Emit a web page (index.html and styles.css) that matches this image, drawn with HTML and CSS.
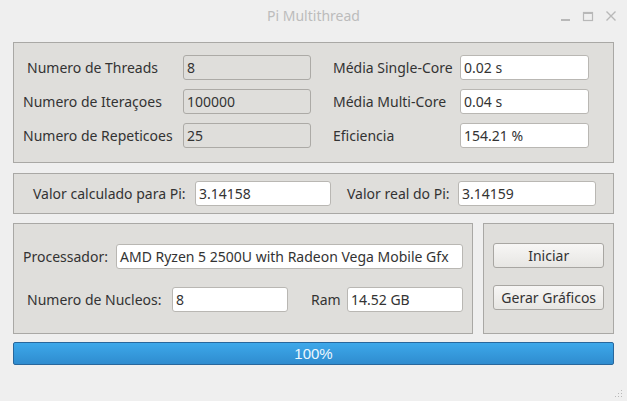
FILE: index.html
```html
<!DOCTYPE html>
<html>
<head>
<meta charset="utf-8">
<link rel="stylesheet" href="styles.css">
</head>
<body>
<div class="window">
  <div class="titlebar">
    <span class="title">Pi Multithread</span>
    <div class="controls">
      <svg width="12" height="12" viewBox="0 0 12 12"><rect x="2" y="9" width="9" height="2" fill="#b8b8b8"/></svg>
      <svg width="12" height="12" viewBox="0 0 12 12"><rect x="1.5" y="2.5" width="9" height="8" fill="none" stroke="#b8b8b8" stroke-width="1.2"/><rect x="1.5" y="2.5" width="9" height="1.5" fill="#b8b8b8"/></svg>
      <svg width="12" height="12" viewBox="0 0 12 12"><path d="M1.5 1.5 L10.5 10.5 M10.5 1.5 L1.5 10.5" stroke="#b8b8b8" stroke-width="1.4"/></svg>
    </div>
  </div>
  <div class="content">
    <div class="group g1">
      <div class="lbl ind4">Numero de Threads</div>
      <div class="field disabled">8</div>
      <div class="lbl r">Média Single-Core</div>
      <div class="field">0.02 s</div>
      <div class="lbl">Numero de Iteraçoes</div>
      <div class="field disabled">100000</div>
      <div class="lbl r">Média Multi-Core</div>
      <div class="field">0.04 s</div>
      <div class="lbl">Numero de Repeticoes</div>
      <div class="field disabled">25</div>
      <div class="lbl r">Eficiencia</div>
      <div class="field">154.21 %</div>
    </div>
    <div class="group g2">
      <div class="lbl l1">Valor calculado para Pi:</div>
      <div class="field f1">3.14158</div>
      <div class="lbl l2">Valor real do Pi:</div>
      <div class="field f2">3.14159</div>
    </div>
    <div class="row3">
      <div class="group g3">
        <div class="prow">
          <div class="lbl lp">Processador:</div>
          <div class="field fp">AMD Ryzen 5 2500U with Radeon Vega Mobile Gfx</div>
        </div>
        <div class="nrow">
          <div class="lbl ln">Numero de Nucleos:</div>
          <div class="field fn">8</div>
          <div class="lbl ram">Ram</div>
          <div class="field fr">14.52 GB</div>
        </div>
      </div>
      <div class="group g4">
        <button class="btn">Iniciar</button>
        <button class="btn">Gerar Gráficos</button>
      </div>
    </div>
    <div class="progress"><span>100%</span></div>
  </div>
  <svg class="grip" width="10" height="10" viewBox="0 0 10 10">
    <g fill="#b8b8b8">
      <rect x="8" y="2" width="1" height="1"/>
      <rect x="5" y="5" width="1" height="1"/><rect x="8" y="5" width="1" height="1"/>
      <rect x="2" y="8" width="1" height="1"/><rect x="5" y="8" width="1" height="1"/><rect x="8" y="8" width="1" height="1"/>
    </g>
  </svg>
</div>
</body>
</html>
```
FILE: styles.css
```css
html, body {
  margin: 0;
  padding: 0;
  background: #efefef;
}
.window {
  position: relative;
  width: 627px;
  height: 401px;
  background: #efefef;
  font-family: "Noto Sans", "DejaVu Sans", sans-serif;
  font-size: 14px;
  color: #333333;
  overflow: hidden;
}
.titlebar {
  height: 30px;
  display: flex;
  align-items: center;
  justify-content: center;
  position: relative;
}
.title {
  color: #bcbcbc;
  font-size: 14px;
}
.controls {
  position: absolute;
  right: 10px;
  top: 10px;
  display: flex;
  gap: 11px;
}
.content {
  padding: 12px 13px 0 13px;
  display: flex;
  flex-direction: column;
}
.group {
  background: #dfdedb;
  border: 1px solid #a9a8a5;
  box-sizing: border-box;
}
.lbl {
  white-space: nowrap;
  box-sizing: border-box;
}
.field {
  box-sizing: border-box;
  height: 25px;
  background: #ffffff;
  border: 1px solid #b9b7b3;
  border-radius: 3px;
  padding: 0 3px;
  display: flex;
  align-items: center;
  white-space: nowrap;
  overflow: hidden;
}
.field.disabled {
  background: #dfdedb;
  border-color: #acaaa6;
}
.g1 {
  height: 121px;
  padding: 12px 0 0 9px;
  display: grid;
  grid-template-columns: 160px 128px 149px 129px;
  grid-auto-rows: 25px;
  row-gap: 9px;
  align-items: center;
}
.g1 .ind4 { padding-left: 4px; }
.g1 .r { padding-left: 22px; }
.g2 {
  margin-top: 10px;
  height: 41px;
  display: flex;
  align-items: center;
  padding-left: 19px;
}
.g2 .l1 { width: 162px; }
.g2 .f1 { width: 136px; }
.g2 .l2 { width: 127px; padding-left: 16px; }
.g2 .f2 { width: 138px; }
.row3 {
  margin-top: 9px;
  display: flex;
  gap: 10px;
  height: 111px;
}
.g3 {
  width: 461px;
  height: 111px;
  padding: 20px 0 0 9px;
  display: flex;
  flex-direction: column;
  gap: 18px;
}
.prow, .nrow {
  display: flex;
  align-items: center;
}
.prow .lp { width: 93px; }
.prow .fp { width: 347px; }
.nrow .ln { width: 149px; padding-left: 4px; }
.nrow .fn { width: 116px; }
.nrow .ram { width: 59px; padding-left: 23px; }
.nrow .fr { width: 116px; }
.g4 {
  width: 131px;
  height: 111px;
  padding: 19px 0 0 9px;
  display: flex;
  flex-direction: column;
  gap: 17px;
}
.btn {
  width: 111px;
  height: 25px;
  font-family: inherit;
  font-size: 14px;
  color: #333333;
  background: linear-gradient(#f7f6f5, #e7e6e3);
  border: 1px solid #a8a6a2;
  border-radius: 3px;
  padding: 0;
}
.progress {
  margin-top: 8px;
  height: 23px;
  box-sizing: border-box;
  border: 1px solid #28679c;
  border-radius: 2px;
  background: linear-gradient(#3da8ea, #2f8ccf);
  display: flex;
  align-items: center;
  justify-content: center;
  color: #eef7fd;
  font-family: "Liberation Sans", Arial, sans-serif;
  font-size: 15px;
}
.grip {
  position: absolute;
  right: 4px;
  bottom: 3px;
}
```
